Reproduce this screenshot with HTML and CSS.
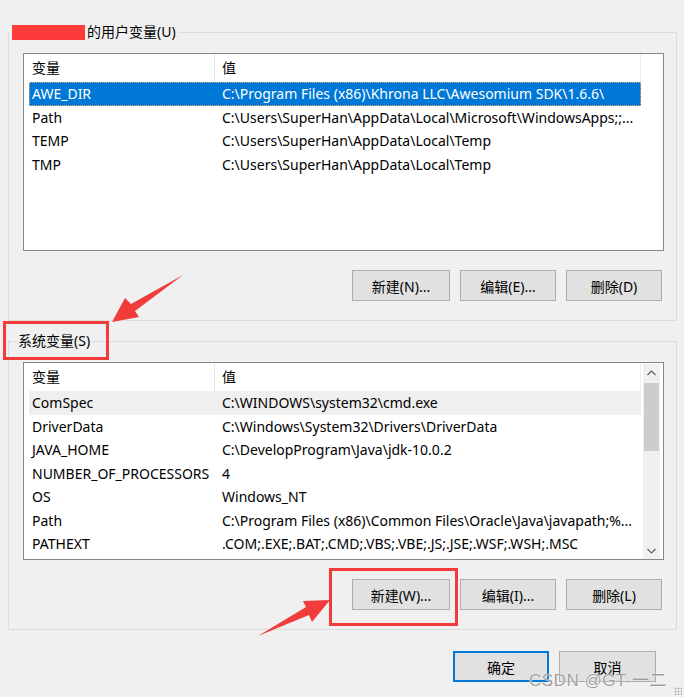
FILE: index.html
```html
<!DOCTYPE html>
<html lang="zh-CN">
<head>
<meta charset="utf-8">
<title>环境变量</title>
<link rel="stylesheet" href="styles.css">
</head>
<body>
<div class="dialog">
  <section class="group group-user">
    <div class="group-title title-user"><span class="redact"></span>的用户变量(U)</div>
    <div class="list">
      <div class="list-main">
        <div class="list-head"><div class="hc hc1">变量</div><div class="hc hc2">值</div></div>
        <div class="row selected"><div class="c1">AWE_DIR</div><div class="c2">C:\Program Files (x86)\Khrona LLC\Awesomium SDK\1.6.6\</div></div>
        <div class="row"><div class="c1">Path</div><div class="c2">C:\Users\SuperHan\AppData\Local\Microsoft\WindowsApps;;...</div></div>
        <div class="row"><div class="c1">TEMP</div><div class="c2">C:\Users\SuperHan\AppData\Local\Temp</div></div>
        <div class="row"><div class="c1">TMP</div><div class="c2">C:\Users\SuperHan\AppData\Local\Temp</div></div>
      </div>
    </div>
    <div class="btns">
      <button class="btn btn-wide">新建(N)...</button>
      <button class="btn">编辑(E)...</button>
      <button class="btn">删除(D)</button>
    </div>
  </section>

  <section class="group group-sys">
    <div class="group-title title-sys">系统变量(S)</div>
    <div class="list">
      <div class="list-main">
        <div class="list-head"><div class="hc hc1">变量</div><div class="hc hc2">值</div></div>
        <div class="row hover"><div class="c1">ComSpec</div><div class="c2">C:\WINDOWS\system32\cmd.exe</div></div>
        <div class="row"><div class="c1">DriverData</div><div class="c2">C:\Windows\System32\Drivers\DriverData</div></div>
        <div class="row"><div class="c1">JAVA_HOME</div><div class="c2">C:\DevelopProgram\Java\jdk-10.0.2</div></div>
        <div class="row"><div class="c1">NUMBER_OF_PROCESSORS</div><div class="c2">4</div></div>
        <div class="row"><div class="c1">OS</div><div class="c2">Windows_NT</div></div>
        <div class="row"><div class="c1">Path</div><div class="c2">C:\Program Files (x86)\Common Files\Oracle\Java\javapath;%...</div></div>
        <div class="row"><div class="c1">PATHEXT</div><div class="c2">.COM;.EXE;.BAT;.CMD;.VBS;.VBE;.JS;.JSE;.WSF;.WSH;.MSC</div></div>
      </div>
      <div class="scrollbar">
        <div class="sb-arrow"><svg width="9" height="6" viewBox="0 0 9 6"><polyline points="0.5,5 4.5,1 8.5,5" fill="none" stroke="#606060" stroke-width="1.2"/></svg></div>
        <div class="sb-track"><div class="sb-thumb"></div></div>
        <div class="sb-arrow"><svg width="9" height="6" viewBox="0 0 9 6"><polyline points="0.5,1 4.5,5 8.5,1" fill="none" stroke="#606060" stroke-width="1.2"/></svg></div>
      </div>
    </div>
    <div class="btns">
      <button class="btn btn-wide">新建(W)...</button>
      <button class="btn">编辑(I)...</button>
      <button class="btn">删除(L)</button>
    </div>
  </section>

  <div class="footer">
    <button class="btn btn-primary">确定</button>
    <button class="btn btn-wide">取消</button>
  </div>

  <div class="mark mark-sys"></div>
  <div class="mark mark-new"></div>
  <svg class="arrows" width="684" height="697" viewBox="0 0 684 697">
    <polygon points="112,322 125,298 131,304 183,275 135,311 139,317" fill="#f23b3b"/>
    <polygon points="330,600 303,601 306,607 258,636 309,615 312,622" fill="#f23b3b"/>
  </svg>
  <div class="watermark">CSDN @GT-一二</div>
  <div class="grip"></div>
</div>
</body>
</html>
```

FILE: styles.css
```css
* { box-sizing: border-box; }

html, body {
  margin: 0;
  padding: 0;
  background: #f0f0f0;
}

body {
  font-family: "Noto Sans", "Noto Sans CJK SC", sans-serif;
  font-size: 14px;
  color: #000;
}

.dialog {
  position: relative;
  width: 684px;
  height: 697px;
  overflow: hidden;
  padding-top: 32px;
}

.group {
  margin: 0 7px 0 8px;
  border: 1px solid #dcdcdc;
  padding: 0 12px 19px 14px;
}

.group-sys {
  margin-top: 20px;
  padding-bottom: 19px;
}

.group-title {
  display: flex;
  align-items: center;
  width: max-content;
  height: 20px;
  line-height: 20px;
  margin-top: -11px;
  padding: 0 2px;
  background: #f0f0f0;
}

.title-user { margin-left: -13px; }
.title-sys { margin-left: -7px; }

.redact {
  display: inline-block;
  width: 73px;
  height: 15px;
  margin-right: 2px;
  background: #fe3b3b;
}

.list {
  display: flex;
  margin-top: 11px;
  height: 198px;
  border: 1px solid #828790;
  background: #fff;
  padding-right: 3px;
}

.list-main {
  width: 619px;
  overflow: hidden;
}

.list-head {
  display: flex;
  width: 617px;
  height: 28px;
  line-height: 27px;
  border-right: 1px solid #ececec;
}

.hc1 {
  width: 191px;
  padding-left: 8px;
  border-right: 1px solid #e5e5e5;
}

.hc2 { padding-left: 7px; }

.row {
  display: flex;
  margin-left: 5px;
  width: 612px;
  height: 23.5px;
  line-height: 23px;
  white-space: nowrap;
}

.c1 {
  width: 190px;
  flex: none;
  padding-left: 3px;
  overflow: hidden;
}

.c2 {
  flex: 1;
  padding-left: 3px;
  overflow: hidden;
}

.row.selected {
  background: #0078d7;
  color: #fff;
  outline: 1px dotted #f0a860;
  outline-offset: -1px;
}

.row.hover { background: #efefef; }

.scrollbar {
  width: 17px;
  flex: none;
  display: flex;
  flex-direction: column;
  background: #f0f0f0;
  margin-top: 1px;
}

.sb-arrow {
  height: 17px;
  display: flex;
  align-items: center;
  justify-content: center;
}

.sb-track { flex: 1; }

.sb-thumb {
  height: 68px;
  margin: 2px 1px 0;
  background: #cdcdcd;
}

.btns {
  display: flex;
  justify-content: flex-end;
  gap: 10px;
  margin-top: 19px;
  padding-right: 2px;
}

.btn {
  width: 96px;
  height: 31px;
  padding: 0;
  border: 1px solid #adadad;
  background: #e1e1e1;
  font-family: "Noto Sans", "Noto Sans CJK SC", sans-serif;
  font-size: 14px;
  color: #000;
}

.btn-wide { width: 98px; }

.btn-primary {
  border: 2px solid #0078d7;
}

.footer {
  display: flex;
  justify-content: flex-end;
  gap: 10px;
  margin-top: 21px;
  padding-right: 28px;
}

.footer .btn-wide { width: 97px; }

.mark {
  position: absolute;
  border: 3px solid #f23b3b;
}

.mark-sys { left: 3px; top: 321px; width: 106px; height: 39px; }
.mark-new { left: 329px; top: 568px; width: 129px; height: 58px; }

.arrows {
  position: absolute;
  left: 0;
  top: 0;
  pointer-events: none;
}

.watermark {
  position: absolute;
  left: 529px;
  top: 670px;
  font-family: "Liberation Sans", "Noto Sans CJK SC", sans-serif;
  font-size: 17px;
  line-height: 22px;
  color: rgba(140, 140, 140, 0.85);
  text-shadow: 0 0 1px #fff, 0 0 1px #fff;
  letter-spacing: 0.5px;
}

.grip {
  position: absolute;
  right: 2px;
  bottom: 2px;
  width: 8px;
  height: 8px;
  background-image: radial-gradient(circle, #b0b0b0 0.8px, transparent 1.2px);
  background-size: 3px 3px;
}
```
